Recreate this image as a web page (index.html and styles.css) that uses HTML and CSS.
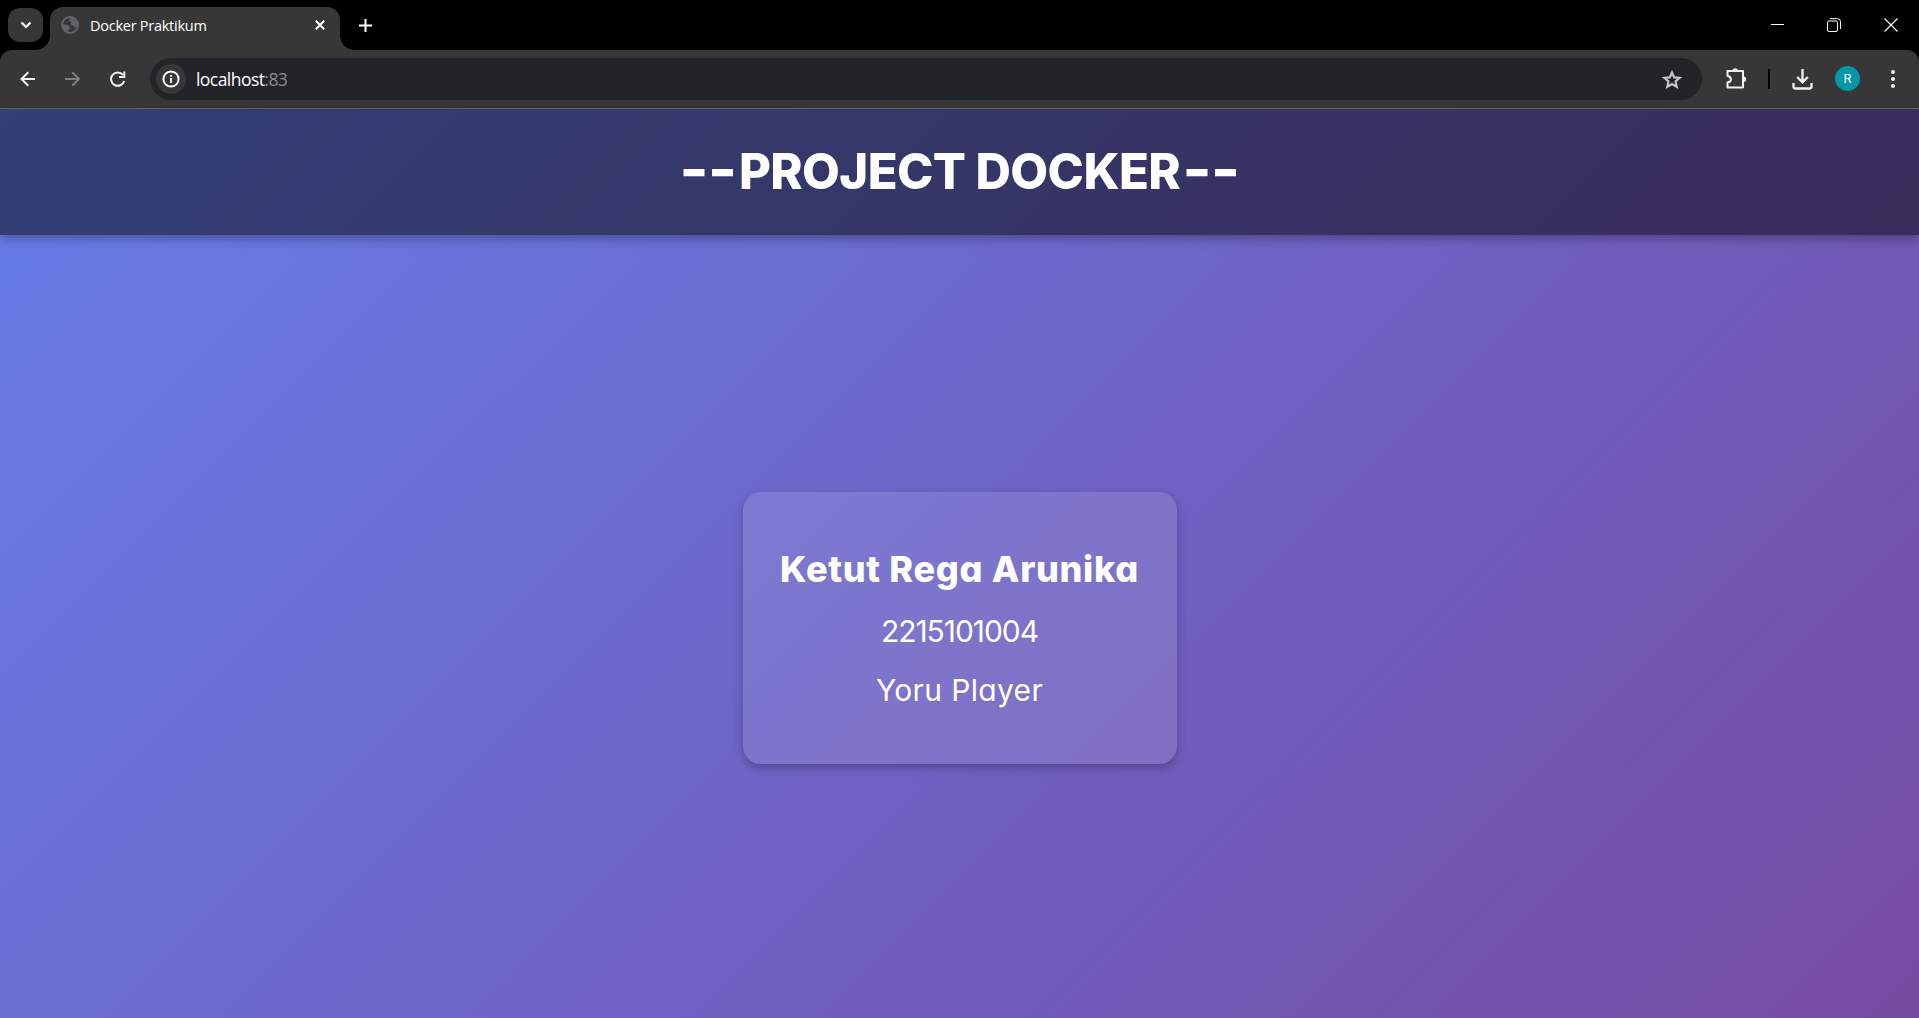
FILE: index.html
```html
<!DOCTYPE html>
<html lang="en">
<head>
<meta charset="utf-8">
<title>Docker Praktikum</title>
<link rel="stylesheet" href="styles.css">
</head>
<body>
<div class="browser">
  <div class="tabstrip">
    <div class="tab-search"><svg width="12" height="8" viewBox="0 0 12 8"><path d="M1.500 1.500 6 6l4.500-4.500" fill="none" stroke="#fff" stroke-width="2.200"/></svg></div>
    <div class="tab">
      <svg class="globe" width="18" height="18" viewBox="0 0 18 18"><circle cx="9" cy="9" r="8" fill="none" stroke="#5f6368" stroke-width="2"/><path d="M9.500 1 8 4.500 10.500 6.500 9.500 9 13 10l1 1.500 3-1.500A8 8 0 0 0 9.500 1ZM1 8l5 1 3 2v2l-2 1 .5 3A8 8 0 0 1 1 8Z" fill="#5f6368"/></svg>
      <span class="tab-title">Docker Praktikum</span>
      <svg class="tab-close" width="10" height="10" viewBox="0 0 10 10"><path d="m.8.8 8.400 8.400M9.200.8.8 9.200" stroke="#fff" stroke-width="2"/></svg>
    </div>
    <svg class="new-tab" width="13" height="13" viewBox="0 0 13 13"><path d="M6.500 0v13M0 6.500h13" stroke="#fff" stroke-width="2"/></svg>
    <div class="window-buttons">
      <svg width="13" height="13" viewBox="0 0 13 13"><path d="M0 6.500h13" stroke="#fff"/></svg>
      <svg width="14" height="14" viewBox="0 0 14 14" fill="none" stroke="#fff"><rect x=".5" y="3" width="10" height="10.500" rx="1.500"/><path d="M3 .7h7.500a3 3 0 0 1 3 3V11"/></svg>
      <svg width="14" height="14" viewBox="0 0 14 14"><path d="m.5.5 13 13M13.500.5l-13 13" stroke="#fff" stroke-width="1.100"/></svg>
    </div>
  </div>
  <div class="toolbar">
    <div class="nav">
      <svg width="16" height="16" viewBox="0 0 16 16" fill="none" stroke="#f1f1f1" stroke-width="2"><path d="M15 8H2M8.300 1.200 1.500 8l6.800 6.800"/></svg>
      <svg width="16" height="16" viewBox="0 0 16 16" fill="none" stroke="#7d7d7d" stroke-width="2"><path d="M0 8H14M7.200 1.200 14 8l-6.800 6.800"/></svg>
      <svg width="16" height="16" viewBox="0 0 16 16"><path d="M13 3.900A6.700 6.700 0 1 0 14.200 10" fill="none" stroke="#f1f1f1" stroke-width="2"/><path d="M15.300.5v6.500H9V5h4.300V.5Z" fill="#f1f1f1"/></svg>
    </div>
    <div class="address">
      <div class="site-info"><svg width="18" height="18" viewBox="0 0 18 18"><circle cx="9" cy="9" r="7.600" fill="none" stroke="#fff" stroke-width="2"/><path d="M8.100 8h1.800v5H8.100ZM8.100 5h1.800v1.800H8.100Z" fill="#fff"/></svg></div>
      <span class="url">localhost<span class="port">:83</span></span>
      <svg class="star" width="20" height="19" viewBox="0 0 20 19"><path d="m10 2.400 2.200 5 5.500.5-4.200 3.600 1.300 5.400L10 14l-4.800 2.900 1.300-5.400-4.200-3.600 5.500-.5Z" fill="none" stroke="#c7c7c7" stroke-width="2.100"/></svg>
    </div>
    <div class="actions">
      <svg class="extensions" width="21" height="21" viewBox="0 0 21 21"><path d="M1.500 3H17v16.500H1.500v-5c4.500-.5 4.500-6 0-6.500Z" fill="none" stroke="#f1f1f1" stroke-width="2" stroke-linejoin="round"/><path d="M6.500 3a2.700 2.700 0 0 1 5.400 0ZM17.500 8.500a2.700 2.700 0 0 1 0 5.400Z" fill="#f1f1f1"/></svg>
      <span class="divider"></span>
      <svg class="download" width="21" height="21" viewBox="0 0 21 21" fill="none" stroke="#f1f1f1" stroke-width="2.300"><path d="M10.500 0v13M5.200 8l5.300 5.300L15.800 8M1.500 14v3.500q0 2 2 2h14q2 0 2-2V14"/></svg>
      <span class="avatar">R</span>
      <svg class="menu" width="4" height="18" viewBox="0 0 4 18" fill="#f1f1f1"><circle cx="2" cy="2" r="2"/><circle cx="2" cy="9" r="2"/><circle cx="2" cy="16" r="2"/></svg>
    </div>
  </div>
</div>
<div class="page">
  <header class="header"><h1><span class="dashes">--</span><span class="title">PROJECT DOCKER</span><span class="dashes">--</span></h1></header>
  <main class="main">
    <section class="card">
      <h2>Ketut Rega Arunika</h2>
      <p class="number">2215101004</p>
      <p class="role">Yoru Player</p>
    </section>
  </main>
</div>
</body>
</html>
```
FILE: styles.css
```css
* { box-sizing: border-box; }
body { margin: 0; height: 1018px; overflow: hidden; display: flex; flex-direction: column; font-family: "Open Sans", sans-serif; color: #fff; }
svg { display: block; flex: none; }
.browser { height: 109px; flex: none; background: #000; border-bottom: 1px solid #686868; }
.tabstrip { height: 50px; display: flex; align-items: flex-start; }
.tab-search { width: 35px; height: 34px; margin: 8px 7px 0 8px; border-radius: 12px; background: #373737; display: flex; align-items: center; justify-content: center; }
.tab { width: 290px; height: 43px; margin-top: 7px; padding: 0 15px 7px 11px; display: flex; align-items: center; background: #373737; border-radius: 13px 13px 0 0; position: relative; }
.tab::before, .tab::after { content: ""; position: absolute; bottom: 0; width: 14px; height: 14px; }
.tab::before { left: -14px; background: radial-gradient(circle at 0 0, transparent 13.500px, #373737 14px); }
.tab::after { right: -14px; background: radial-gradient(circle at 100% 0, transparent 13.500px, #373737 14px); }
.tab-title { margin-left: 11px; font-size: 14.500px; letter-spacing: -0.26px; white-space: nowrap; }
.tab-close { margin-left: auto; }
.new-tab { margin: 19px 0 0 19px; }
.window-buttons { margin: 18px 21px 0 auto; display: flex; gap: 43px; }
.toolbar { height: 58px; padding-left: 20px; background: #373737; border-radius: 12px 12px 0 0; display: flex; align-items: center; }
.nav { display: flex; gap: 29px; }
.address { width: 1552px; height: 42px; margin-left: 24px; padding: 0 20px 0 6px; border-radius: 21px; background: #222428; display: flex; align-items: center; }
.site-info { width: 30px; height: 30px; border-radius: 50%; background: #373737; display: flex; align-items: center; justify-content: center; }
.url { margin-left: 10px; font-size: 17.500px; letter-spacing: -0.550px; }
.port { color: #898b8e; }
.star { margin-left: auto; }
.actions { display: flex; align-items: center; margin-left: 24px; }
.extensions { margin-bottom: 2px; }
.divider { width: 2px; height: 20px; margin-left: 21px; background: #000; }
.download { margin-left: 22px; }
.avatar { width: 25px; height: 25px; margin: 0 0 1px 22px; border-radius: 50%; background: #0097a7; font: 13px/25px Roboto, sans-serif; text-align: center; }
.menu { margin-left: 31px; }
.page { flex: 1; display: flex; flex-direction: column; background: linear-gradient(135deg, #667eea, #764ba2); font-family: Inter, sans-serif; font-feature-settings: "cv11"; }
.header { height: 126px; flex: none; display: flex; justify-content: center; align-items: center; background: rgba(0, 0, 0, .5); box-shadow: 0 4px 10px rgba(0, 0, 0, .3); }
h1 { margin: 0; display: flex; align-items: center; font-size: 49px; line-height: 76px; letter-spacing: -0.600px; font-weight: 800; white-space: nowrap; }
.dashes { width: 60px; padding-bottom: 4px; display: flex; justify-content: center; letter-spacing: -0.500px; font-weight: 900; transform: scaleX(1.25); }
.title { width: 443px; display: flex; justify-content: center; }
.main { flex: 1; display: flex; justify-content: center; align-items: center; padding-top: 3px; }
.card { width: 434px; height: 272px; padding-top: 50px; border-radius: 18px; background: rgba(255, 255, 255, .11); box-shadow: 0 4px 10px rgba(0, 0, 0, .25); text-align: center; white-space: nowrap; }
.card h2 { margin: 0; font-size: 36px; line-height: 54px; font-weight: 800; letter-spacing: 0.700px; }
.card p { margin: 0; line-height: 46px; font-size: 30px; }
.card .number { margin-top: 12px; letter-spacing: -1.050px; }
.card .role { margin-top: 13px; letter-spacing: 0.350px; }
```
